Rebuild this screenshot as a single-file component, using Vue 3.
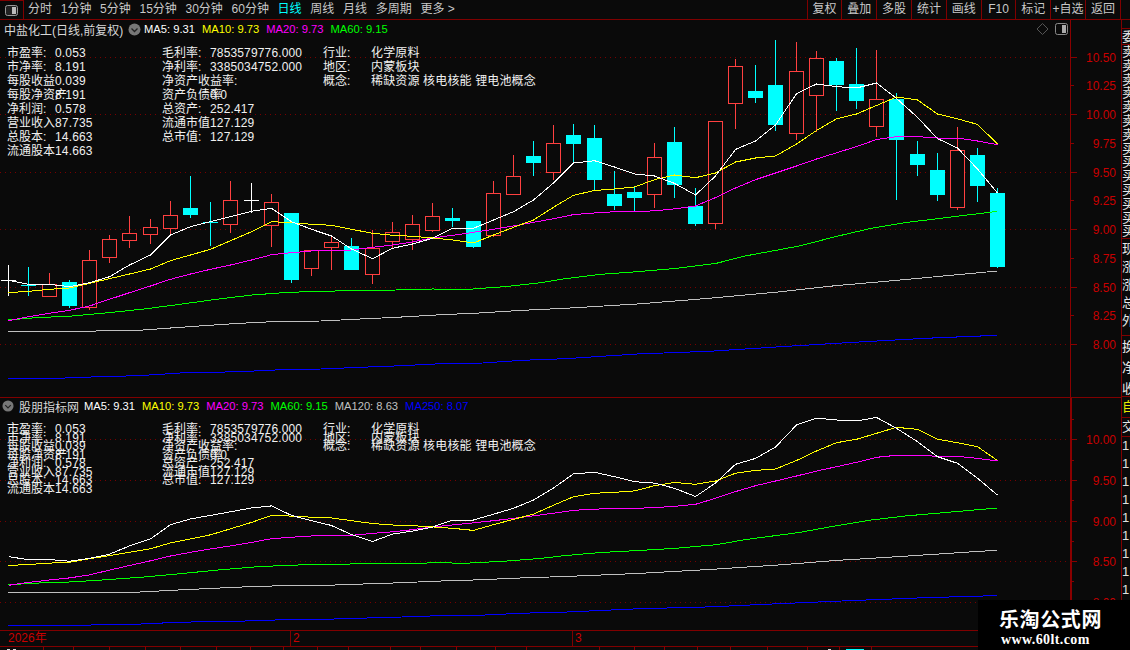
<script setup>
const nav = ['分时', '1分钟', '5分钟', '15分钟', '30分钟', '60分钟', '日线', '周线', '月线', '多周期', '更多 >']
const tools = ['复权', '叠加', '多股', '统计', '画线', 'F10', '标记', '+自选', '返回']

const col1 = [['市盈率:', '0.053'], ['市净率:', '8.191'], ['每股收益', '0.039'], ['每股净资产', '8.191'], ['净利润:', '0.578'], ['营业收入', '87.735'], ['总股本:', '14.663'], ['流通股本', '14.663']]
const col2 = [['毛利率:', '7853579776.000'], ['净利率:', '3385034752.000'], ['净资产收益率:', ''], ['资产负债率', '0.0'], ['总资产:', '252.417'], ['流通市值', '127.129'], ['总市值:', '127.129']]
const col3 = [['行业:', '化学原料'], ['地区:', '内蒙板块'], ['概念:', '稀缺资源 核电核能 锂电池概念']]
const cols = [
  { key: 'a', width: 155, rows: col1 },
  { key: 'b', width: 161, rows: col2 },
  { key: 'c', width: 400, rows: col3 }
]

const legend1 = [['MA5: 9.31', '#ffffff'], ['MA10: 9.73', '#ffff00'], ['MA20: 9.73', '#ff00ff'], ['MA60: 9.15', '#00ff00']]
const legend2 = [...legend1, ['MA120: 8.63', '#c0c0c0'], ['MA250: 8.07', '#0000ff']]

const X = (i) => Math.round(8.3 + 20.185 * i)

// [kind, wickTop, bodyTop, bodyBottom, wickBottom]
const raw = [
  ['w', 265, 280, 280, 296], ['c', 267, 285, 285, 296], ['r', 273, 284, 296, 296], ['c', 280, 282, 306, 308], ['r', 250, 260, 307, 310],
  ['r', 235, 239, 257, 263], ['r', 216, 233, 240, 248], ['r', 219, 227, 234, 244], ['r', 201, 215, 228, 235], ['c', 176, 208, 215, 218],
  ['c', 202, 222, 222, 246], ['r', 181, 200, 224, 233], ['w', 183, 200, 200, 213], ['r', 194, 202, 225, 247], ['c', 213, 213, 280, 283],
  ['r', 250, 250, 268, 276], ['r', 237, 242, 247, 270], ['c', 238, 246, 270, 270], ['r', 230, 248, 274, 284], ['r', 222, 232, 241, 248],
  ['r', 215, 224, 239, 250], ['r', 203, 216, 230, 232], ['c', 208, 218, 221, 227], ['c', 221, 221, 247, 248], ['r', 181, 193, 235, 237],
  ['r', 155, 176, 194, 194], ['c', 141, 156, 163, 176], ['r', 125, 143, 172, 180], ['c', 124, 135, 144, 162], ['c', 125, 138, 180, 190],
  ['c', 171, 194, 206, 210], ['c', 186, 192, 198, 211], ['r', 143, 157, 194, 208], ['c', 127, 142, 185, 198], ['c', 188, 206, 224, 226],
  ['r', 121, 121, 223, 229], ['r', 59, 66, 103, 129], ['c', 65, 91, 98, 103], ['c', 40, 85, 125, 131], ['r', 42, 71, 133, 140],
  ['r', 51, 58, 95, 132], ['c', 58, 61, 85, 111], ['c', 48, 84, 101, 109], ['r', 50, 99, 126, 137], ['c', 93, 99, 140, 200],
  ['c', 141, 154, 165, 176], ['c', 153, 170, 195, 201], ['r', 127, 150, 207, 210], ['c', 148, 155, 186, 202], ['c', 188, 193, 267, 268]
]
const colorOf = { r: '#ff4040', c: '#00ffff', w: '#ffffff' }
const candles = raw.map(([k, wt, bt, bb, wb], i) => {
  const x = X(i)
  return { i, x: x + 0.5, k, color: colorOf[k], wt, bt, bb, wb, doji: bb - bt < 1 }
})

const ma5 = [280.3, 284.3, 284.3, 286.7, 282.7, 276.7, 265, 255, 235, 226.7, 221.7, 216.7, 211.3, 208.3, 221.7, 229.3, 236, 249, 258.7, 248.3, 244, 238.3, 228.3, 228.3, 220, 211.7, 200, 183, 163, 160.7, 167, 174, 176, 183.4, 195, 176, 149.4, 141, 125, 93.7, 84, 86.6, 88, 83, 98.4, 117.4, 138.6, 148, 169, 193]
const ma10 = [292.7, 291.3, 289.3, 288, 283.3, 278.7, 274, 269, 260.7, 255, 249.3, 240.7, 231.7, 221.7, 222.7, 224.3, 225.3, 229.3, 233.3, 235.3, 236.3, 238, 240, 243, 235, 227.3, 220, 207.3, 195.3, 190.5, 189, 187, 179.7, 175, 177.7, 173, 162, 158, 156, 144, 130.5, 118.8, 114, 105.5, 97, 100, 114, 118.8, 124.4, 144]
const ma20 = [320.7, 316.7, 313.3, 310.3, 306, 299.3, 292.7, 286, 279.3, 274, 269.3, 265, 260, 254.7, 252.7, 251, 250.3, 250, 247.3, 245, 242, 238, 235.3, 232.3, 229.3, 226, 222.3, 218.7, 214.6, 213, 211.7, 211.7, 210.8, 208.9, 206, 197.6, 188, 179.7, 173, 166, 159, 152.8, 146.6, 139.5, 136.6, 136.6, 138, 138, 141, 144.7]

const seq = (arr) => arr.map((y, i) => [X(i) + 0.5, y])
const fromZoom = (left, right) => [
  ...left.map(([a, b]) => [a / 2.775, 170 + b / 3]),
  ...right.map(([a, b]) => [565 + a / 2.775, 170 + b / 3])
]
const ma60 = fromZoom(
  [[23, 450], [100, 443], [200, 438], [300, 428], [400, 417], [500, 403], [600, 388], [700, 375], [800, 367], [900, 364], [1000, 361], [1100, 360], [1200, 357], [1300, 358], [1400, 350], [1500, 338], [1568, 326]],
  [[100, 313], [200, 305], [300, 296], [420, 280], [500, 258], [650, 228], [750, 200], [850, 175], [950, 157], [1050, 144], [1200, 124]]
)
const ma120 = fromZoom(
  [[23, 484], [218, 484], [385, 481], [500, 472], [665, 460], [780, 454], [890, 453], [1000, 447], [1100, 442], [1225, 434], [1330, 429], [1450, 421], [1568, 415]],
  [[200, 402], [400, 385], [600, 365], [750, 347], [900, 333], [1050, 318], [1200, 303]]
)
const ma250 = fromZoom(
  [[23, 625], [160, 625], [275, 620], [385, 617], [500, 609], [665, 605], [780, 599], [890, 597], [1000, 592], [1115, 587], [1225, 581], [1340, 579], [1450, 571], [1568, 566]],
  [[200, 552], [400, 544], [600, 530], [800, 517], [1000, 505], [1200, 496]]
)

const toP2 = (y) => 601.7 - (344 - y) * 0.706
const pts = (list, f = (y) => y) => list.map(([x, y]) => `${x.toFixed(1)},${f(y).toFixed(1)}`).join(' ')

const series = [
  [ma250, '#0000ff', 'm250'], [ma120, '#c0c0c0', 'm120'], [ma60, '#00ff00', 'm60'],
  [seq(ma20), '#ff00ff', 'm20'], [seq(ma10), '#ffff00', 'm10'], [seq(ma5), '#ffffff', 'm5']
]
const lines1 = series.map(([l, c, k]) => ({ k, c, p: pts(l) }))
const lines2 = series.map(([l, c, k]) => ({ k, c, p: pts(l, toP2) }))

const yP1 = (p) => Math.round(344 - (p - 8) * 115)
const yP2 = (p) => Math.round(601.7 - (p - 8) * 81.2)
const axis1 = []
for (let v = 10.5; v >= 8; v -= 0.25) {
  const major = Math.abs(v * 2 - Math.round(v * 2)) < 0.01
  axis1.push({ v: v.toFixed(2), y: yP1(v), major, label: true })
}
const axis2 = []
for (let v = 10.25; v >= 8; v -= 0.25) {
  const major = Math.abs(v * 2 - Math.round(v * 2)) < 0.01
  axis2.push({ v: v.toFixed(2), y: yP2(v), major, label: major })
}

const sideA = ['卖', '卖', '卖', '卖', '卖', '卖', '卖', '买', '买', '买', '买', '买', '买', '买']
const sideB = ['现', '涨', '涨', '总', '外']
const sideC = ['换', '净', '收']
const digits = ['1', '1', '1', '1', '1', '1', '1', '1', '1', '1', '1']
const stripTicks = [43, 73, 109, 145, 180, 216, 250, 283, 317, 348, 390, 420, 456, 495, 526, 599, 634, 664, 697, 730, 767, 807, 839, 871]
</script>

<template>
  <div class="page">
    <header class="toolbar">
      <div class="corner">
        <svg width="13" height="11" viewBox="0 0 13 11"><rect x="0.5" y="0.5" width="12" height="10" rx="2" fill="#222" stroke="#999" /><rect x="7" y="2" width="4" height="7" fill="#bbb" /></svg>
      </div>
      <nav class="nav">
        <span v-for="n in nav" :key="n" :class="{ active: n === '日线' }">{{ n }}</span>
      </nav>
      <div class="tools">
        <span v-for="t in tools" :key="t">{{ t }}</span>
      </div>
    </header>

    <div class="body">
      <div class="charts">
        <section class="pane pane-one">
          <svg class="canvas" width="1121" height="377" viewBox="0 20 1121 377">
            <line v-for="a in axis1.filter(t => t.major)" :key="a.v" x1="0" x2="1070" :y1="a.y + 0.5" :y2="a.y + 0.5" class="grid" />
            <g v-for="c in candles" :key="c.i" shape-rendering="crispEdges" :stroke="c.color">
              <line :x1="c.x" :x2="c.x" :y1="c.wt" :y2="c.k === 'r' ? c.bt : c.wb" />
              <line v-if="c.k === 'r'" :x1="c.x" :x2="c.x" :y1="c.bb" :y2="c.wb" />
              <rect v-if="c.k === 'r'" :x="c.x - 7" :y="c.bt + 0.5" width="14" :height="c.bb - c.bt" fill="#0a0a0a" />
              <line v-else-if="c.doji" :x1="c.x - 7.5" :x2="c.x + 7.5" :y1="c.bt + 0.5" :y2="c.bt + 0.5" />
              <rect v-else :x="c.x - 8" :y="c.bt" width="15" :height="c.bb - c.bt" :fill="c.color" stroke="none" />
            </g>
            <polyline v-for="l in lines1" :key="l.k" :points="l.p" :stroke="l.c" class="ma" />
            <line x1="1070.5" x2="1070.5" y1="20" y2="397" class="axis" />
            <g v-for="a in axis1" :key="a.v">
              <line x1="1071" :x2="a.major ? 1077 : 1074" :y1="a.y + 0.5" :y2="a.y + 0.5" class="axis" />
              <text x="1116" :y="a.y + 4.5" text-anchor="end" class="axis-label">{{ a.v }}</text>
            </g>
            <g fill="none" stroke="#555">
              <path d="M1042.5 23.5l5.5 5.5l-5.5 5.5l-5.5-5.5z" />
              <rect x="1055.5" y="23.5" width="12" height="11" rx="2" stroke="#888" />
              <rect x="1062" y="25" width="4" height="8" fill="#aaa" stroke="none" />
            </g>
          </svg>
          <div class="title-row">
            <span class="title">中盐化工(日线,前复权)</span>
            <svg class="chev" width="13" height="13" viewBox="0 0 13 13"><circle cx="6.5" cy="6.5" r="6" fill="#777" /><path d="M3.5 5.5l3 3l3-3" fill="none" stroke="#222" stroke-width="1.3" /></svg>
            <span v-for="l in legend1" :key="l[0]" class="legend" :style="{ color: l[1] }">{{ l[0] }}</span>
          </div>
          <div class="table">
            <div v-for="c in cols" :key="c.key" class="col" :style="{ width: c.width + 'px' }">
              <div v-for="r in c.rows" :key="r[0]" class="row"><span class="lab">{{ r[0] }}</span><span class="val">{{ r[1] }}</span></div>
            </div>
          </div>
        </section>

        <section class="pane pane-two">
          <svg class="canvas" width="1121" height="232" viewBox="0 398 1121 232">
            <line v-for="a in axis2.filter(t => t.major)" :key="a.v" x1="0" x2="1070" :y1="a.y + 0.5" :y2="a.y + 0.5" class="grid" />
            <polyline v-for="l in lines2" :key="l.k" :points="l.p" :stroke="l.c" class="ma" />
            <line x1="1071" x2="1071" y1="398" y2="630" class="axis thick" />
            <g v-for="a in axis2" :key="a.v">
              <line x1="1071" :x2="a.major ? 1077 : 1074" :y1="a.y + 0.5" :y2="a.y + 0.5" class="axis" />
              <text v-if="a.label" x="1116" :y="a.y + 4.5" text-anchor="end" class="axis-label">{{ a.v }}</text>
            </g>
          </svg>
          <div class="title-row second">
            <svg class="chev first" width="12" height="12" viewBox="0 0 13 13"><circle cx="6.5" cy="6.5" r="6" fill="#777" /><path d="M3.5 5.5l3 3l3-3" fill="none" stroke="#222" stroke-width="1.3" /></svg>
            <span class="title">股朋指标网</span>
            <span v-for="l in legend2" :key="l[0]" class="legend" :style="{ color: l[1] }">{{ l[0] }}</span>
          </div>
          <div class="table dense">
            <div v-for="c in cols" :key="c.key" class="col" :style="{ width: c.width + 'px' }">
              <div v-for="r in c.rows" :key="r[0]" class="row"><span class="lab">{{ r[0] }}</span><span class="val">{{ r[1] }}</span></div>
            </div>
          </div>
        </section>

        <div class="timeline">
          <span class="seg s1">2026年</span>
          <span class="seg s2">2</span>
          <span class="seg s3">3</span>
        </div>
        <svg class="strip" width="1121" height="4" viewBox="0 0 1121 4">
          <line v-for="t in stripTicks" :key="t" :x1="t + 0.5" :x2="t + 0.5" y1="0" y2="4" class="axis" />
          <rect x="7" y="2" width="3" height="2" fill="#ddd" /><rect x="13" y="2" width="3" height="2" fill="#ddd" />
          <rect x="828" y="2" width="3" height="2" fill="#ddd" /><rect x="846" y="2" width="18" height="2" fill="#00ffff" />
        </svg>
      </div>

      <aside class="side">
        <div class="box b1"><span>委</span></div>
        <div class="box b2"><span v-for="(s, i) in sideA" :key="i">{{ s }}</span></div>
        <div class="box b3"><span v-for="(s, i) in sideB" :key="i">{{ s }}</span></div>
        <div class="box b4"><span v-for="(s, i) in sideC" :key="i">{{ s }}</span></div>
        <div class="box b5"><span>自</span></div>
        <div class="box b6"><span>交</span></div>
        <div class="box b7"><span v-for="(s, i) in digits" :key="i">{{ s }}</span></div>
      </aside>
    </div>

    <div class="stamp">
      <div class="stamp-cn">乐淘公式网</div>
      <div class="stamp-en">www.60lt.com</div>
    </div>
  </div>
</template>

<style scoped>
.page {
  position: relative;
  width: 1130px;
  height: 650px;
  overflow: hidden;
  background: #0a0a0a;
  color: #e8e8e8;
  font-family: "Liberation Sans", "Noto Sans CJK SC", sans-serif;
  font-size: 12px;
  display: flex;
  flex-direction: column;
}
.toolbar {
  height: 20px;
  flex: none;
  display: flex;
  align-items: stretch;
  box-sizing: border-box;
  border-bottom: 1px solid #800000;
  color: #c8c8c8;
  line-height: 19px;
}
.corner {
  width: 24px;
  box-sizing: border-box;
  border-top: 1px solid #800000;
  border-right: 1px solid #800000;
  display: flex;
  align-items: center;
  justify-content: center;
  padding-right: 1px;
}
.nav {
  display: flex;
  gap: 8.7px;
  padding-left: 4px;
  white-space: nowrap;
}
.nav .active { color: #00ffff; }
.tools {
  margin-left: auto;
  display: flex;
  padding-right: 9px;
}
.tools span {
  width: 34.8px;
  box-sizing: border-box;
  border-left: 1px solid #800000;
  text-align: center;
  white-space: nowrap;
}
.tools span:last-child { border-right: 1px solid #800000; width: 36px; }
.body {
  flex: 1;
  display: flex;
  min-height: 0;
}
.charts {
  width: 1121px;
  flex: none;
  display: flex;
  flex-direction: column;
}
.pane { position: relative; flex: none; }
.pane-one { height: 377px; }
.pane-two { height: 232px; border-top: 1px solid #800000; }
.canvas { position: absolute; left: 0; top: 0; display: block; }
.grid { stroke: #780000; stroke-width: 1; stroke-dasharray: 1 4; shape-rendering: crispEdges; }
.axis { stroke: #8a0000; stroke-width: 1; shape-rendering: crispEdges; }
.thick { stroke-width: 2; }
.axis-label { fill: #c80000; font-size: 12px; }
.ma { fill: none; stroke-width: 1; shape-rendering: crispEdges; }
.title-row {
  position: relative;
  height: 18px;
  display: flex;
  align-items: center;
  padding-left: 4px;
  white-space: nowrap;
  color: #d8d8d8;
}
.title { width: 118px; }
.chev { margin-left: 6px; margin-right: 3px; }
.legend { font-size: 11.2px; margin-right: 7px; }
.second { height: 16px; padding-left: 2px; }
.second .first { margin: 0 5px 0 0; }
.second .title { width: 65px; }
.table {
  position: relative;
  display: flex;
  padding: 8px 0 0 7px;
  line-height: 14px;
  color: #f0f0f0;
}
.row {
  height: 14px;
  display: flex;
  white-space: nowrap;
}
.lab { width: 48px; flex: none; }
.val { letter-spacing: 0.15px; }
.dense { padding-top: 11px; line-height: 8.55px; }
.dense .row { height: 8.55px; }
.timeline {
  height: 15px;
  flex: none;
  display: flex;
  border-top: 1px solid #800000;
  border-bottom: 1px solid #800000;
  color: #c80000;
  line-height: 15px;
}
.seg { box-sizing: border-box; padding-left: 2px; }
.s1 { width: 290px; padding-left: 8px; }
.s2 { width: 282px; border-left: 1px solid #800000; }
.s3 { flex: 1; border-left: 1px solid #800000; }
.strip { display: block; flex: none; }
.side {
  flex: 1;
  min-width: 0;
  display: flex;
  flex-direction: column;
  overflow: hidden;
  border-left: 1px solid #800000;
  padding-top: 8px;
  font-size: 13px;
}
.box {
  flex: none;
  display: flex;
  flex-direction: column;
  overflow: hidden;
  border-bottom: 1px solid #800000;
  white-space: nowrap;
}
.box span { display: block; width: 14px; }
.b1 { height: 17px; border-top: 1px solid #800000; line-height: 16px; box-sizing: border-box; }
.b2 { height: 194px; box-sizing: border-box; line-height: 13.8px; }
.b3 { height: 97px; box-sizing: border-box; line-height: 18px; padding-top: 1px; }
.b4 { height: 61px; box-sizing: border-box; line-height: 21px; }
.b5 { height: 21px; box-sizing: border-box; color: #e8e800; line-height: 20px; }
.b6 { height: 19px; box-sizing: border-box; line-height: 18px; }
.b7 { height: 193px; box-sizing: border-box; line-height: 18px; color: #e0e0e0; border-bottom: 0; }
.stamp {
  position: absolute;
  left: 978px;
  top: 600px;
  width: 152px;
  height: 50px;
  background: #000;
  box-sizing: border-box;
  padding-left: 21px;
  color: #fff;
  font-weight: 700;
}
.stamp-cn {
  font-size: 20px;
  line-height: 24px;
  padding-top: 7px;
  letter-spacing: 0.6px;
  font-family: "Noto Sans CJK SC", sans-serif;
}
.stamp-en {
  font-family: "Liberation Serif", serif;
  font-size: 14px;
  line-height: 16px;
  margin-top: 1px;
  margin-left: 2px;
  letter-spacing: 0.4px;
}
</style>
